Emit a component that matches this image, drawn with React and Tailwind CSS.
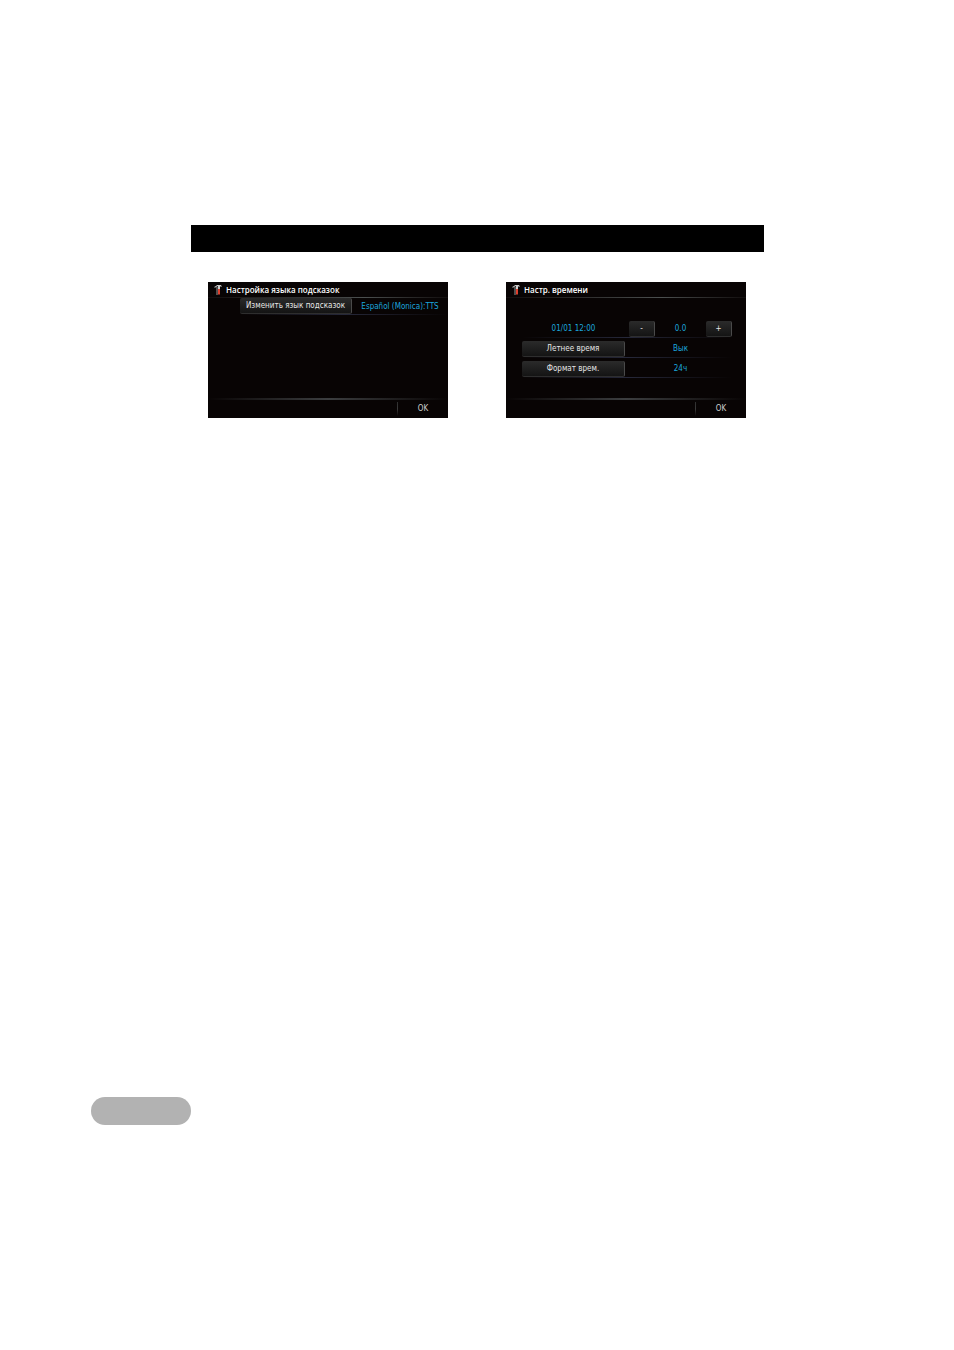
import React from 'react';

function ToolIcon() {
  return (
    <svg className="h-3 w-2 shrink-0" viewBox="0 0 8 12" fill="none" aria-hidden="true">
      <path d="M1 4V2.5h2V11" stroke="#9a9a9a" strokeWidth="1" />
      <path d="M2.5 1.5H7V3" stroke="#c4c4c4" strokeWidth="1" />
      <path d="M5 2v3" stroke="#cfcfcf" strokeWidth="2" />
      <path d="M5 5v5.5" stroke="#e0402e" strokeWidth="2" />
    </svg>
  );
}

function Divider({ className }) {
  return <div className={`h-px bg-linear-to-r from-transparent via-[#26283a] to-transparent ${className}`} />;
}

function KeyButton({ children, className }) {
  return (
    <button
      type="button"
      className={`h-4 rounded-xs border-r border-b border-r-[#4a4a4a] border-b-[#2e2e2e] bg-linear-to-b from-[#2b2b2b] to-[#141414] pt-px text-center leading-[14px] text-[#e6e6e6] ${className}`}
    >
      {children}
    </button>
  );
}

function Screen({ title, children }) {
  return (
    <section className="flex h-[136px] flex-col overflow-hidden bg-[#080404] text-[8px] leading-4 whitespace-nowrap">
      <header>
        <div className="flex h-[15px] items-center gap-1 pl-1.5">
          <ToolIcon />
          <h2 className="font-['Open_Sans',sans-serif] font-semibold text-white">{title}</h2>
        </div>
        <div className="h-px bg-linear-to-r from-[#120e0e] via-[#4c5050] via-65% to-[#120e0e]" />
      </header>
      <div className="flex-1">{children}</div>
      <footer>
        <div className="h-0.5 bg-linear-to-r from-transparent via-[#3c3e40] to-transparent" />
        <div className="flex h-[18px] justify-end">
          <div className="my-0.5 w-px bg-linear-to-b from-[#2e2e2e] via-[#3a3a3a] to-transparent" />
          <button type="button" className="w-[50px] pb-px text-[#cfcfcf]">OK</button>
        </div>
      </footer>
    </section>
  );
}

function LanguageScreen() {
  return (
    <Screen title="Настройка языка подсказок">
      <div className="flex h-4 items-center pl-8">
        <KeyButton className="w-28">Изменить язык подсказок</KeyButton>
        <span className="flex-1 pt-px text-center text-[#1ba6dc]">Español (Monica):TTS</span>
      </div>
      <Divider className="ml-8" />
    </Screen>
  );
}

function TimeRow({ label, children }) {
  return (
    <div>
      <div className="grid h-[19px] grid-cols-2 items-end gap-1">
        {label}
        {children}
      </div>
      <Divider className="" />
    </div>
  );
}

function TimeScreen() {
  return (
    <Screen title="Настр. времени">
      <div className="pt-5 pr-3.5 pl-4 text-center text-[#1ba6dc]">
        <TimeRow label={<span>01/01 12:00</span>}>
          <div className="flex items-center">
            <KeyButton className="w-[26px]">-</KeyButton>
            <span className="flex-1">0.0</span>
            <KeyButton className="w-[26px]">+</KeyButton>
          </div>
        </TimeRow>
        <TimeRow label={<KeyButton>Летнее время</KeyButton>}>
          <span>Вык</span>
        </TimeRow>
        <TimeRow label={<KeyButton>Формат врем.</KeyButton>}>
          <span>24ч</span>
        </TimeRow>
      </div>
    </Screen>
  );
}

export default function App() {
  return (
    <div className="min-h-screen bg-white font-['DejaVu_Sans_Condensed','DejaVu_Sans',sans-serif]">
      <main className="pt-[225px] pr-[190px] pl-[191px]">
        <div className="h-[27px] bg-black" />
        <div className="grid grid-cols-2 gap-[58px] pt-[30px] pr-[18px] pl-[17px]">
          <LanguageScreen />
          <TimeScreen />
        </div>
      </main>
      <footer className="pt-[679px] pl-[91px]">
        <div className="h-7 w-[100px] rounded-full bg-[#b2b2b2]" />
      </footer>
    </div>
  );
}
